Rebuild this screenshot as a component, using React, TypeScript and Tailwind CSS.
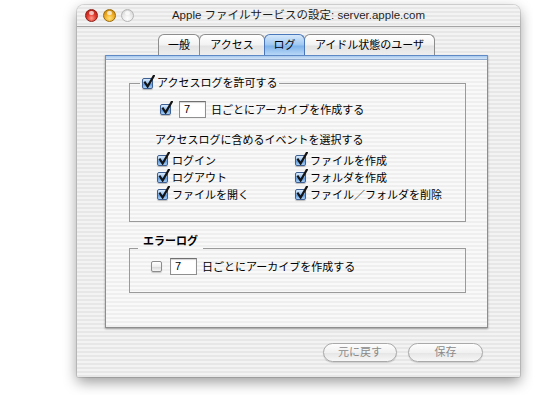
import type { ReactNode } from "react";

const winStripes =
	"bg-[image:repeating-linear-gradient(to_bottom,#f3f3f3_0px,#f3f3f3_2px,#e7e7e7_2px,#e7e7e7_4px)]";
const paneStripes =
	"bg-[image:repeating-linear-gradient(to_bottom,#f9f9f9_0px,#f9f9f9_2px,#efefef_2px,#efefef_4px)]";

function CheckBox({ checked }: { checked?: boolean }) {
	return (
		<span className="relative inline-block h-[11px] w-[11px] shrink-0">
			{checked ? (
				<span className="block h-full w-full rounded-[2px] border border-[#3d5f92] bg-[image:linear-gradient(to_bottom,#dcecfc_0%,#96c2f1_45%,#5b98e0_55%,#a9d0f6_100%)] shadow-[0_1px_1px_rgba(0,0,0,0.25)]" />
			) : (
				<span className="block h-full w-full rounded-[2px] border border-[#8c8c8c] bg-[image:linear-gradient(to_bottom,#ffffff_0%,#eeeeee_50%,#d8d8d8_55%,#f5f5f5_100%)] shadow-[0_1px_1px_rgba(0,0,0,0.2)]" />
			)}
			{checked && (
				<svg className="absolute -top-[3px] left-[1px] h-[13px] w-[12px]" viewBox="0 0 12 13">
					<path d="M2 7.5 L4.6 11.5 L10.8 0.8" fill="none" stroke="#141414" strokeWidth="2.2" strokeLinecap="square" />
				</svg>
			)}
		</span>
	);
}

function NumField() {
	return (
		<span className="inline-flex h-[17px] w-[27px] shrink-0 items-center border border-[#8f8f8f] border-t-[#707070] bg-white pl-[4px] text-[11px] leading-none shadow-[inset_0_1px_1px_rgba(0,0,0,0.18)]">
			7
		</span>
	);
}

function Light({ kind }: { kind: "red" | "yellow" | "gray" }) {
	const cls = {
		red: "border-[#8e1d16] bg-[image:radial-gradient(circle_at_50%_75%,#ff9b8c_0%,#e0382c_45%,#a01a12_100%)]",
		yellow: "border-[#9a6a08] bg-[image:radial-gradient(circle_at_50%_75%,#ffe27a_0%,#f3b02a_45%,#b87a06_100%)]",
		gray: "border-[#b4b4b4] bg-[image:radial-gradient(circle_at_50%_75%,#ffffff_0%,#e8e8e8_50%,#cfcfcf_100%)]",
	}[kind];
	return (
		<span className={`relative block h-[13px] w-[13px] rounded-full border ${cls}`}>
			<span className="absolute left-[3px] top-[1px] h-[4px] w-[5px] rounded-full bg-white/70" />
		</span>
	);
}

const tabs = [
	{ label: "一般", w: "w-[42px]" },
	{ label: "アクセス", w: "w-[66px]" },
	{ label: "ログ", w: "w-[41px]", active: true },
	{ label: "アイドル状態のユーザ", w: "w-[131px]" },
];

function Row({ children }: { children: ReactNode }) {
	return <div className="flex h-[17px] items-center">{children}</div>;
}

function Check({ label }: { label: string }) {
	return (
		<Row>
			<CheckBox checked />
			<span className="ml-[4px]">{label}</span>
		</Row>
	);
}

function PillButton({ label, w }: { label: string; w: string }) {
	return (
		<div
			className={`flex h-[19px] ${w} items-center justify-center rounded-full border border-[#a9a9a9] bg-[image:linear-gradient(to_bottom,#fdfdfd_0%,#f1f1f1_50%,#e6e6e6_55%,#f7f7f7_100%)] text-[11px] text-[#8a8a8a] shadow-[0_1px_1px_rgba(0,0,0,0.15)]`}
		>
			{label}
		</div>
	);
}

export default function App() {
	return (
		<div className="h-[395px] w-[533px] bg-white pl-[77px] pt-[5px] font-['Liberation_Sans','Noto_Sans_CJK_JP',sans-serif] text-black">
			<div
				className={`flex h-[372px] w-[443px] flex-col rounded-t-[7px] rounded-b-[2px] ${winStripes} shadow-[0_5px_14px_rgba(0,0,0,0.4),0_0_0_1px_rgba(0,0,0,0.12)]`}
			>
				{/* title bar */}
				<div className="grid h-[22px] grid-cols-[1fr_auto_1fr] items-center border-b border-[#a4a4a4]">
					<div className="flex gap-[5px] pl-[8px]">
						<Light kind="red" />
						<Light kind="yellow" />
						<Light kind="gray" />
					</div>
					<div className="text-[11.5px] leading-none text-[#1e1e1e]">
						Apple ファイルサービスの設定: server.apple.com
					</div>
					<div />
				</div>

				{/* tab view */}
				<div className="ml-[28px] mt-[7px] w-[383px]">
					<div className="flex h-[21px] justify-center">
						{tabs.map((t) => (
							<div
								key={t.label}
								className={`-ml-px flex h-[21px] ${t.w} items-center justify-center rounded-t-[6px] border border-b-0 text-[11px] leading-none first:ml-0 ${
									t.active
										? "relative z-10 border-[#4a77ba] bg-[image:linear-gradient(to_bottom,#d6e8fb_0%,#9ec8f2_50%,#7fb3ea_55%,#b7d7f7_100%)]"
										: "border-[#8d8d8d] bg-[image:linear-gradient(to_bottom,#ffffff_0%,#f2f2f2_50%,#e3e3e3_55%,#eeeeee_100%)]"
								}`}
							>
								{t.label}
							</div>
						))}
					</div>

					<div
						className={`flex h-[273px] flex-col border-x border-b border-[#8e8e8e] ${paneStripes} shadow-[0_1px_2px_rgba(0,0,0,0.35)]`}
					>
						<div className="h-[5px] border-t border-b border-t-[#5f89c4] border-b-[#8ea9cc] bg-[image:linear-gradient(to_bottom,#a7c8ee,#d3e5f8)]" />

						<div className="pl-[23px] pr-[21px] text-[11px] leading-[14px]">
							<fieldset className="mt-[16px] border border-[#9a9a9a] p-0">
								<legend className="ml-[10px] px-[2px]">
									<span className="flex items-center gap-[4px]">
										<CheckBox checked />
										<span>アクセスログを許可する</span>
									</span>
								</legend>
								<div className="pb-[18px] pt-[11px]">
									<div className="flex h-[17px] items-center pl-[30px]">
										<CheckBox checked />
										<span className="ml-[8px]">
											<NumField />
										</span>
										<span className="ml-[5px]">日ごとにアーカイブを作成する</span>
									</div>
									<div className="mt-[15px] pl-[25px]">アクセスログに含めるイベントを選択する</div>
									<div className="mt-[5px] grid grid-cols-[138px_1fr] pl-[27px]">
										<Check label="ログイン" />
										<Check label="ファイルを作成" />
										<Check label="ログアウト" />
										<Check label="フォルダを作成" />
										<Check label="ファイルを開く" />
										<Check label="ファイル／フォルダを削除" />
									</div>
								</div>
							</fieldset>

							<fieldset className="mt-[12px] border border-[#9a9a9a] p-0">
								<legend className="ml-[8px] px-[5px]">
									<span className="block pb-[14px] font-bold">エラーログ</span>
								</legend>
								<div className="-mt-[4px] flex h-[17px] items-center pl-[21px]">
									<CheckBox />
									<span className="ml-[8px]">
										<NumField />
									</span>
									<span className="ml-[5px]">日ごとにアーカイブを作成する</span>
								</div>
								<div className="h-[17px]" />
							</fieldset>
						</div>
					</div>
				</div>

				{/* buttons */}
				<div className="mt-[15px] flex justify-end gap-[11px] pr-[37px]">
					<PillButton label="元に戻す" w="w-[74px]" />
					<PillButton label="保存" w="w-[75px]" />
				</div>
			</div>
		</div>
	);
}
